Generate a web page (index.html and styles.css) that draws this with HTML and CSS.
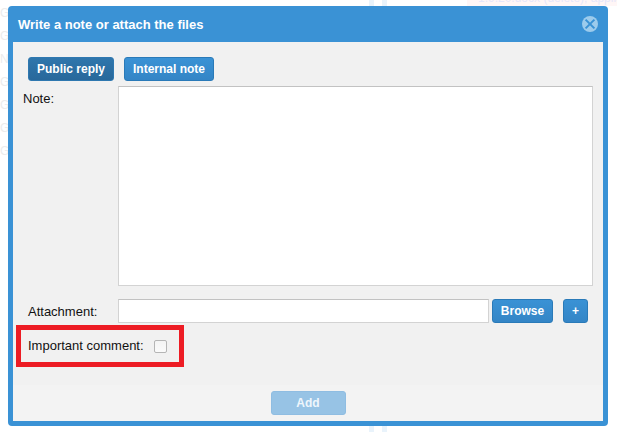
FILE: index.html
```html
<!DOCTYPE html>
<html lang="en">
<head>
<meta charset="utf-8">
<title>Write a note or attach the files</title>
<link rel="stylesheet" href="styles.css">
</head>
<body>
<div class="backdrop">
  <div class="bg-letters"><span>G</span><span>G</span><span>N</span><span>G</span><span>G</span><span>G</span><span>G</span></div>
  <div class="bg-file">1.9.20.docx (delete); applicat</div>
  <div class="bg-bar bar-a"></div>
  <div class="bg-bar bar-b"></div>
</div>
<section class="dialog">
  <header class="dialog-head">
    <h1 class="dialog-title">Write a note or attach the files</h1>
    <svg class="close" width="16" height="16" viewBox="0 0 16 16" aria-label="Close">
      <circle cx="8" cy="8" r="8" fill="#9ccbec"/>
      <path d="M3.6 3.6 12.4 12.4M12.4 3.6 3.6 12.4" stroke="#3a92d5" stroke-width="2" fill="none"/>
    </svg>
  </header>
  <div class="dialog-body">
    <div class="main">
      <div class="tabs">
        <button class="btn btn-active tab-public">Public reply</button>
        <button class="btn tab-internal">Internal note</button>
      </div>
      <div class="note-row">
        <label class="note-label">Note:</label>
        <div class="field note-area"></div>
      </div>
      <div class="attach-row">
        <label class="attach-label">Attachment:</label>
        <div class="field attach-input"></div>
        <button class="btn btn-browse">Browse</button>
        <button class="btn btn-plus">+</button>
      </div>
      <div class="important">
        <label class="important-label">Important comment:</label>
        <span class="check"></span>
      </div>
    </div>
    <footer class="dialog-foot">
      <button class="btn btn-add">Add</button>
    </footer>
  </div>
</section>
</body>
</html>
```
FILE: styles.css
```css
* { box-sizing: border-box; }
html, body { margin: 0; padding: 0; height: 100%; overflow: hidden; background: #fff; }
body { font-family: "Liberation Sans", Arial, sans-serif; font-size: 13px; color: #111; position: relative; }

.backdrop { position: absolute; inset: 0; overflow: hidden; }
.bg-letters { position: absolute; left: 0; top: 2px; display: flex; flex-direction: column; color: #ececec; font-size: 12px; line-height: 23px; }
.bg-letters span { display: block; }
.bg-file { position: absolute; left: 467px; top: -9px; width: 150px; height: 15px; padding-left: 11px; background: #fff6f6; color: #e6e6fa; font-size: 12px; line-height: 15px; white-space: nowrap; overflow: hidden; }
.bg-bar { position: absolute; top: 0; bottom: 0; width: 5px; background: #e9f3fb; }
.bar-a { left: 369px; }
.bar-b { left: 382px; }

.dialog { position: relative; width: 600px; height: 420px; margin: 6px 0 0 8px; background: #3a92d5; border-radius: 4px; display: flex; flex-direction: column; padding: 0 5px 5px; }
.dialog-head { height: 36px; flex: none; display: flex; align-items: center; justify-content: space-between; padding: 0 5px; }
.dialog-title { margin: 0; font-size: 13px; font-weight: bold; color: #fff; }
.close { display: block; }

.dialog-body { flex: 1; display: flex; flex-direction: column; background: #f1f1f1; min-height: 0; }
.main { flex: 1; padding: 15px 10px 0 3px; }
.dialog-foot { height: 36px; flex: none; background: #f3f3f3; display: flex; justify-content: center; padding-top: 6px; padding-left: 1px; }

.btn { display: block; height: 24px; padding: 0; border: 1px solid #2a7ab8; border-radius: 3px; background: linear-gradient(#3a92d5, #3485c6); color: #fff; font-family: inherit; font-size: 12px; font-weight: bold; text-align: center; }
.btn-active { background: linear-gradient(#2f76ac, #28689b); border-color: #2f78b0; }

.tabs { display: flex; gap: 10px; padding-left: 12px; }
.tab-public { width: 86px; }
.tab-internal { width: 90px; }

.note-row { display: flex; margin-top: 5px; }
.note-label { width: 102px; padding-left: 7px; padding-top: 5px; line-height: 15px; }
.field { background: #fff; border: 1px solid #d3d3d3; border-top-color: #c2c2c2; }
.note-area { width: 475px; height: 200px; }

.attach-row { display: flex; align-items: center; margin-top: 13px; }
.attach-label { width: 102px; padding-left: 12px; }
.attach-input { width: 371px; height: 24px; }
.btn-browse { width: 61px; margin-left: 3px; }
.btn-plus { width: 25px; margin-left: 10px; }

.important { width: 168px; height: 42px; margin-top: 2px; border: 5px solid #ed1c24; display: flex; align-items: center; padding-left: 7px; }
.important-label { width: 126px; margin-top: -1px; }
.check { width: 13px; height: 13px; border: 1px solid #b5b5b5; border-radius: 2px; background: linear-gradient(#f4f4f4, #fafafa); }

.btn-add { width: 75px; padding-right: 1px; background: #97c3e5; border-color: #8fbde2; color: #eef6fc; }
```
